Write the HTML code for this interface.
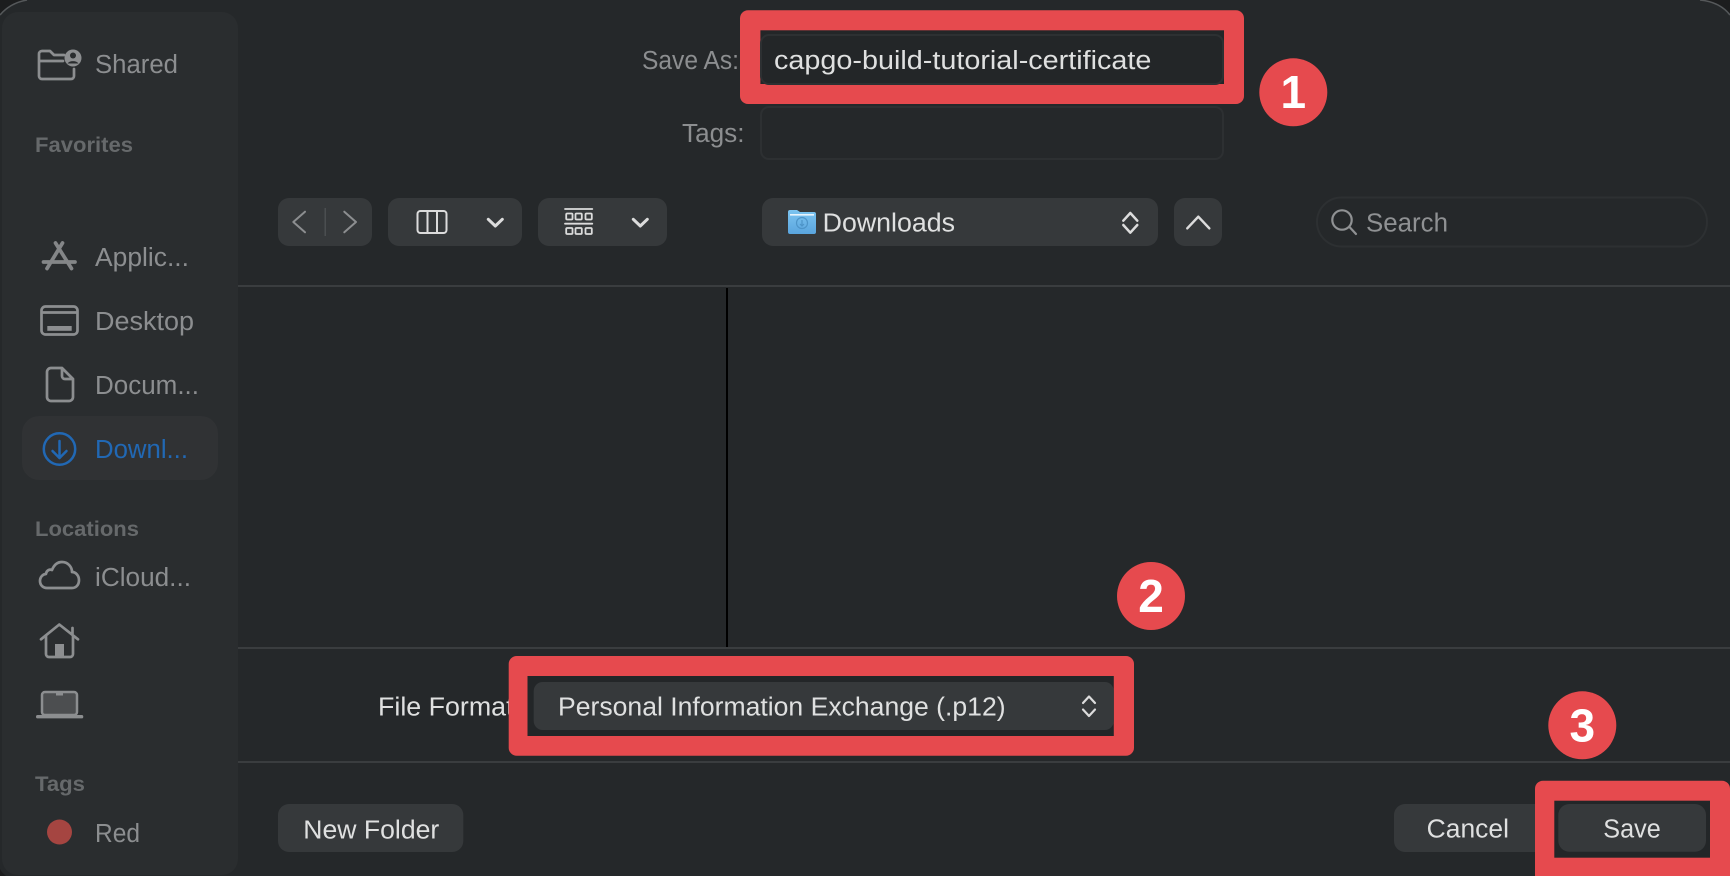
<!DOCTYPE html>
<html><head><meta charset="utf-8"><style>
html,body{margin:0;padding:0;background:#25282a;width:1730px;height:876px;overflow:hidden}
svg{display:block}
text{font-family:"Liberation Sans",sans-serif;font-size:25.5px}
.s{fill:#8c8e90}.h{fill:#66696b;font-weight:bold;font-size:21px}.w{fill:#dfe0e0}
.ic{fill:none;stroke:#8c8e90;stroke-width:2.7;stroke-linecap:round;stroke-linejoin:round}
.t{fill:none;stroke:#dcdcdc;stroke-linecap:round;stroke-linejoin:round}
.b{fill:#36393b}
.n{fill:#fff;font-weight:bold;font-size:46px;text-anchor:middle}
</style></head><body>
<svg width="1730" height="876" viewBox="0 0 1730 876" xmlns="http://www.w3.org/2000/svg">
<defs><linearGradient id="f" x1="0" y1="0" x2="0" y2="1"><stop offset="0" stop-color="#7cc4f0"/><stop offset="1" stop-color="#5aa5de"/></linearGradient></defs>
<rect width="1730" height="876" fill="#25282a"/>
<path d="M0 0H27Q10 3 0 15ZM1730 0H1700Q1720 2 1730 15Z" fill="#1c1d1e"/>
<path d="M0 15Q10 3 27 0M1700 0Q1720 2 1730 15" fill="none" stroke="#55585a" stroke-width="1.5"/>
<path d="M0 869Q2 873 6 876H0Z" fill="#1c1d1e"/>
<rect x="2" y="12" width="236" height="863" rx="16" fill="#2a2d2f"/>

<text class="s" x="95" y="73" textLength="83" lengthAdjust="spacingAndGlyphs">Shared</text>
<text class="h" x="35" y="152" textLength="98" lengthAdjust="spacingAndGlyphs">Favorites</text>
<text class="s" x="95" y="266" textLength="94" lengthAdjust="spacingAndGlyphs">Applic...</text>
<text class="s" x="95" y="330" textLength="99" lengthAdjust="spacingAndGlyphs">Desktop</text>
<text class="s" x="95" y="394" textLength="104" lengthAdjust="spacingAndGlyphs">Docum...</text>
<rect x="22" y="416" width="196" height="64" rx="17" fill="#303234"/>
<text x="95" y="458" textLength="93" lengthAdjust="spacingAndGlyphs" fill="#2168b4">Downl...</text>
<text class="h" x="35" y="536" textLength="104" lengthAdjust="spacingAndGlyphs">Locations</text>
<text class="s" x="95" y="586" textLength="96" lengthAdjust="spacingAndGlyphs">iCloud...</text>
<text class="h" x="35" y="791" textLength="50" lengthAdjust="spacingAndGlyphs">Tags</text>
<circle cx="59.5" cy="832" r="12.5" fill="#a54541"/>
<text class="s" x="95" y="842" textLength="45" lengthAdjust="spacingAndGlyphs">Red</text>

<!-- shared -->
<path class="ic" d="M74 69V76a3 3 0 0 1-3 3H42a3 3 0 0 1-3-3V54a3 3 0 0 1 3-3h8l4 4h10M40 61H63"/>
<circle cx="73" cy="58" r="8.5" fill="#8c8e90"/>
<circle cx="73" cy="55.5" r="3" fill="#2a2d2f"/><path d="M67.5 63.5a6 4 0 0 1 11 0z" fill="#2a2d2f"/>
<!-- app store -->
<path class="ic" style="stroke-width:3.7;stroke:#848688" d="M62.5 243L47 268.500M55.500 243L71.500 268.500M43.500 262H75"/>
<!-- desktop -->
<rect class="ic" x="41.5" y="306.5" width="36" height="28" rx="4"/><path class="ic" d="M42 312.5H77"/>
<rect x="47.3" y="326" width="24.4" height="4.8" fill="#8c8e90"/>
<!-- doc -->
<path class="ic" d="M62 368H51a4 4 0 0 0-4 4V397a4 4 0 0 0 4 4H69a4 4 0 0 0 4-4V379ZM62 368V376a3 3 0 0 0 3 3H73"/>
<!-- download -->
<g fill="none" stroke="#2168b4" stroke-width="2.5" stroke-linecap="round" stroke-linejoin="round"><circle cx="59.5" cy="449" r="15.7"/><path d="M59.5 441V458M52.5 451L59.5 458L66.5 451"/></g>
<!-- cloud -->
<path class="ic" d="M47 588C43 588 40 585 40 581C40 577 43 574 46 574C46.5 570 50 569 52 570C54 565 57 562 62 562C68 562 72 567 72 572C76 572 79 576 79 580C79 585 76 588 72 588Z"/>
<!-- home -->
<path class="ic" d="M41 639.3L59.3 624.5L78 639.3M46 636V654a3 3 0 0 0 3 3H70a3 3 0 0 0 3-3V636M72.5 628V634"/>
<rect x="55" y="644" width="9" height="13" fill="#8c8e90"/>
<!-- laptop -->
<rect x="42" y="692" width="35" height="23" rx="3" fill="#4c4e50" stroke="#8c8e90" stroke-width="2.5"/>
<rect x="36" y="715" width="47.3" height="3.4" rx="1.7" fill="#8c8e90"/>
<rect x="56" y="693" width="7" height="2.5" fill="#8c8e90"/>

<!-- dividers -->
<rect x="238" y="285" width="1492" height="2" fill="#3a3d3f"/>
<rect x="238" y="647" width="1492" height="2" fill="#3a3d3f"/>
<rect x="238" y="761" width="1492" height="2" fill="#3a3d3f"/>
<rect x="726" y="288" width="2" height="359" fill="#000"/>

<!-- form labels -->
<text class="s" x="642" y="69" textLength="97" lengthAdjust="spacingAndGlyphs">Save As:</text>
<text class="s" x="682" y="142" textLength="62.5" lengthAdjust="spacingAndGlyphs">Tags:</text>
<rect x="761" y="107" width="462" height="52" rx="8" fill="none" stroke="#2d3032" stroke-width="2"/>

<!-- toolbar -->
<rect class="b" x="278" y="198" width="94" height="48" rx="11"/>
<rect x="324.5" y="208" width="1.5" height="28" fill="#4b4e50"/>
<path class="ic" d="M305 211.7L293.3 222L305 232.3M344.3 211.7L356 222L344.3 232.3" style="stroke-width:2"/>
<rect class="b" x="388" y="198" width="134" height="48" rx="11"/>
<g class="t" stroke-width="2"><rect x="417.5" y="211" width="29" height="22" rx="3"/><path d="M427.5 211V233M437 211V233"/></g>
<path class="t" stroke-width="3" d="M488.3 219.3L495.3 226L502.3 219.3"/>
<rect class="b" x="538" y="198" width="129" height="48" rx="11"/>
<g class="t" stroke-width="1.8" stroke-linecap="butt"><path d="M565 209H592.3M565 223.7H592.3"/>
<rect x="566.2" y="213.5" width="6.3" height="6" rx="1"/><rect x="575.5" y="213.5" width="6.3" height="6" rx="1"/><rect x="585.5" y="213.5" width="6.3" height="6" rx="1"/>
<rect x="566.2" y="228" width="6.3" height="6" rx="1"/><rect x="575.5" y="228" width="6.3" height="6" rx="1"/><rect x="585.5" y="228" width="6.3" height="6" rx="1"/></g>
<path class="t" stroke-width="3" d="M633.3 219.3L640.3 226L647.3 219.3"/>

<rect class="b" x="762" y="198" width="396" height="48" rx="11"/>
<path d="M788 212a2 2 0 0 1 2-2h7l3 2h14a2 2 0 0 1 2 2v18a2 2 0 0 1-2 2H790a2 2 0 0 1-2-2Z" fill="url(#f)"/>
<rect x="790" y="214" width="24" height="1.6" fill="#e8f4fc"/>
<circle cx="802" cy="223" r="5.5" fill="none" stroke="#4d94c8" stroke-width="1.2"/><path d="M802 220V226M800 224L802 226L804 224" fill="none" stroke="#4d94c8" stroke-width="1.2"/>
<text class="w" x="822.7" y="231.7" textLength="132.3" lengthAdjust="spacingAndGlyphs">Downloads</text>
<path class="t" stroke-width="2.5" d="M1123.3 220.7L1130.3 213L1137.3 220.7M1123.3 225L1130.3 232.7L1137.3 225"/>
<rect class="b" x="1174" y="198" width="48" height="48" rx="11"/>
<path class="t" stroke-width="2.5" d="M1187.3 228.3L1198.3 216.7L1209.3 228.3"/>

<rect x="1317" y="197.5" width="390" height="49" rx="24.5" fill="none" stroke="#2d3032" stroke-width="2"/>
<g fill="none" stroke="#8f9193" stroke-width="2.2" stroke-linecap="round"><circle cx="1342" cy="220" r="9.7"/><path d="M1349.5 227L1356 234"/></g>
<text x="1366" y="231.3" textLength="82" lengthAdjust="spacingAndGlyphs" fill="#8f9193">Search</text>

<!-- file format -->
<text class="w" x="378" y="715.3" textLength="143" lengthAdjust="spacingAndGlyphs">File Format:</text>

<!-- bottom buttons -->
<rect class="b" x="278" y="804" width="185.300" height="48" rx="11"/>
<text class="w" x="303.300" y="838.3" textLength="136" lengthAdjust="spacingAndGlyphs">New Folder</text>
<rect class="b" x="1394" y="804" width="160" height="48" rx="11"/>
<text class="w" x="1426.7" y="837.3" textLength="82.3" lengthAdjust="spacingAndGlyphs">Cancel</text>

<!-- red box 1 -->
<rect x="740" y="10.300" width="504" height="93.700" rx="8" fill="#e64a4e"/>
<rect x="760.400" y="30.300" width="463.600" height="53.700" fill="#232628"/>
<rect x="761" y="35" width="462" height="49" rx="8" fill="none" stroke="#2d3032" stroke-width="2"/>
<text class="w" x="774" y="69" textLength="377.400" lengthAdjust="spacingAndGlyphs">capgo-build-tutorial-certificate</text>

<!-- red box 2 -->
<rect x="508.700" y="656" width="625.300" height="99.700" rx="8" fill="#e64a4e"/>
<rect x="527.500" y="676" width="586.300" height="60" fill="#232628"/>
<rect x="533.700" y="682" width="580.100" height="48" rx="9" fill="#36393b"/>
<text class="w" x="558" y="715.3" textLength="447.600" lengthAdjust="spacingAndGlyphs">Personal Information Exchange (.p12)</text>
<path class="t" stroke-width="2.2" d="M1083 703L1089 696.5L1095 703M1083 709.500L1089 716L1095 709.500"/>

<!-- red box 3 -->
<rect x="1535" y="780.700" width="195" height="110" rx="8" fill="#e64a4e"/>
<rect x="1554.300" y="800.700" width="155.700" height="57" fill="#232628"/>
<rect class="b" x="1558.300" y="804" width="147.700" height="47.700" rx="11"/>
<text class="w" x="1603.300" y="837.3" textLength="57.400" lengthAdjust="spacingAndGlyphs">Save</text>

<!-- badges -->
<circle cx="1293.300" cy="92.300" r="34" fill="#e64a4e"/><text class="n" x="1293.300" y="108">1</text>
<circle cx="1151" cy="596" r="34" fill="#e64a4e"/><text class="n" x="1151" y="612">2</text>
<circle cx="1582.300" cy="725.300" r="34" fill="#e64a4e"/><text class="n" x="1582.300" y="741.500">3</text>
</svg>
</body></html>
